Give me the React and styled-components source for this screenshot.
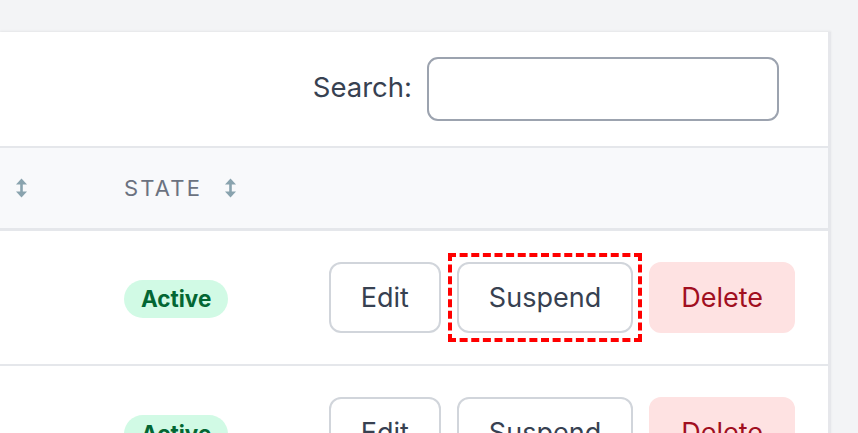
import React from "react";
import styled, { createGlobalStyle } from "styled-components";

const GlobalStyle = createGlobalStyle`
  html, body {
    margin: 0;
    padding: 0;
    background: #f3f4f6;
    font-family: "Inter", "Liberation Sans", sans-serif;
  }
`;

const users = [
  { id: 1, state: "Active" },
  { id: 2, state: "Active" },
];

const SortIcon = () => (
  <svg width="13" height="20" viewBox="0 0 13 20" fill="#89a3ae">
    <polygon points="6.5,0.5 12,6.5 1,6.5" />
    <rect x="5.2" y="5" width="2.6" height="10" />
    <polygon points="6.5,19.5 12,13.5 1,13.5" />
  </svg>
);

const Page = () => (
  <Wrapper>
    <GlobalStyle />
    <Card>
      <Toolbar>
        <SearchLabel htmlFor="search">Search:</SearchLabel>
        <SearchInput id="search" type="text" />
      </Toolbar>

      <HeaderRow>
        <HeadCell>
          <SortIcon />
        </HeadCell>
        <HeadCell>
          STATE
          <SortIcon />
        </HeadCell>
        <HeadCell />
      </HeaderRow>

      {users.map((user) => (
        <Row key={user.id}>
          <Cell />
          <Cell>
            <Badge>{user.state}</Badge>
          </Cell>
          <Actions>
            <Button>Edit</Button>
            <Button $focused={user.id === 1}>Suspend</Button>
            <Button $variant="danger">Delete</Button>
          </Actions>
        </Row>
      ))}
    </Card>
  </Wrapper>
);

const Wrapper = styled.div`
  padding-top: 32px;
  height: 401px;
  overflow: hidden;
`;

const Card = styled.div`
  width: 828px;
  background: #ffffff;
  border-right: 3px solid #e6e7eb;
  box-shadow: 0 -1px 2px rgba(0, 0, 0, 0.06);
`;

const Toolbar = styled.div`
  display: flex;
  align-items: center;
  justify-content: flex-end;
  gap: 15px;
  padding: 25px 49px 25px 0;
`;

const SearchLabel = styled.label`
  font-size: 27.5px;
  color: #374151;
  margin-top: -4px;
`;

const SearchInput = styled.input`
  box-sizing: border-box;
  width: 352px;
  height: 64px;
  border: 2px solid #9ca3af;
  border-radius: 11px;
  background: #fff;
  outline: none;
`;

const grid = `
  display: grid;
  grid-template-columns: 124px 1fr auto;
  align-items: center;
`;

const HeaderRow = styled.div`
  ${grid}
  height: 80px;
  background: #f8f9fb;
  border-top: 2px solid #e5e7eb;
  border-bottom: 3px solid #e5e7eb;
  border-right: 2px solid #e5e7eb;
  margin-right: -2px;
`;

const HeadCell = styled.div`
  display: flex;
  align-items: center;
  gap: 22px;
  padding-left: 15px;
  font-size: 22px;
  letter-spacing: 2.2px;
  color: #6b7280;

  &:nth-child(2) {
    padding-left: 0;
  }
`;

const Row = styled.div`
  ${grid}
  height: 133px;
  border-bottom: 2px solid #e5e7eb;
`;

const Cell = styled.div`
  display: flex;
  align-items: center;
`;

const Badge = styled.span`
  display: inline-block;
  padding: 4px 17px;
  margin-top: 3px;
  line-height: 30px;
  font-size: 22.5px;
  font-weight: 700;
  color: #036633;
  background: #d1fae5;
  border-radius: 999px;
`;

const Actions = styled.div`
  display: flex;
  gap: 16px;
  padding-right: 33px;
`;

const Button = styled.button`
  position: relative;
  box-sizing: border-box;
  height: 71px;
  padding: 0 30px;
  font-family: inherit;
  font-size: 27px;
  color: ${(p) => (p.$variant === "danger" ? "#a10f1f" : "#374151")};
  background: ${(p) => (p.$variant === "danger" ? "#fee2e2" : "#ffffff")};
  border: 2px solid
    ${(p) => (p.$variant === "danger" ? "#fee2e2" : "#d1d5db")};
  border-radius: 12px;
  outline: none;

  &::after {
    content: "";
    display: ${(p) => (p.$focused ? "block" : "none")};
    position: absolute;
    inset: -11px;
    border: 4px dashed #ff0000;
    pointer-events: none;
  }
`;

export default Page;
